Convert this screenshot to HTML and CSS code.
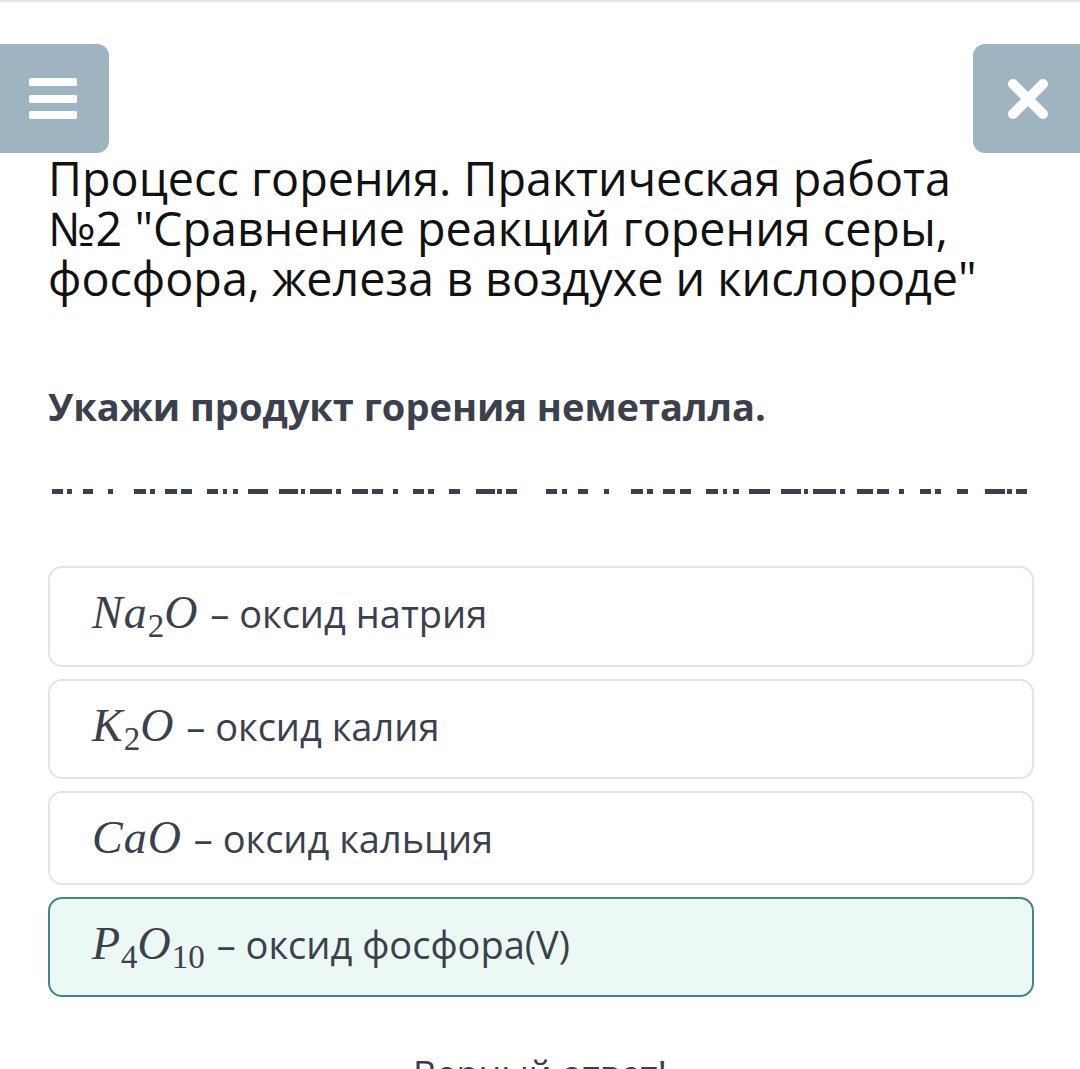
FILE: index.html
```html
<!DOCTYPE html>
<html lang="ru">
<head>
<meta charset="utf-8">
<title>Процесс горения</title>
<link rel="stylesheet" href="styles.css">
</head>
<body>
<div class="page">
  <header class="bar">
    <button class="btn btn-menu" aria-label="Меню">
      <svg width="48" height="42" viewBox="0 0 48 42">
        <rect x="0" y="0" width="48" height="8" rx="1.5" fill="#fff"/>
        <rect x="0" y="17" width="48" height="8" rx="1.5" fill="#fff"/>
        <rect x="0" y="33" width="48" height="8" rx="1.5" fill="#fff"/>
      </svg>
    </button>
    <button class="btn btn-close" aria-label="Закрыть">
      <svg width="44" height="44" viewBox="0 0 44 44">
        <path d="M7 7 L37 37 M37 7 L7 37" stroke="#fff" stroke-width="10" stroke-linecap="round"/>
      </svg>
    </button>
  </header>

  <h1 class="title">Процесс горения. Практическая работа №2 "Сравнение реакций горения серы, фосфора, железа в воздухе и кислороде"</h1>

  <p class="question">Укажи продукт горения неметалла.</p>

  <svg class="blanks" width="1080" height="5" viewBox="0 0 1080 5" fill="#3a414c">
    <rect x="52" width="11" height="5"/><rect x="67" width="5" height="5"/><rect x="83" width="10" height="5"/><rect x="108" width="5" height="5"/>
    <rect x="134" width="12" height="5"/><rect x="150" width="5" height="5"/><rect x="165" width="12" height="5"/><rect x="181" width="11" height="5"/>
    <rect x="207" width="11" height="5"/><rect x="223" width="4" height="5"/><rect x="233" width="5" height="5"/><rect x="248" width="20" height="5"/>
    <rect x="279" width="19" height="5"/><rect x="301" width="4" height="5"/><rect x="310" width="22" height="5"/><rect x="336" width="5" height="5"/>
    <rect x="352" width="16" height="5"/><rect x="372" width="11" height="5"/><rect x="393" width="5" height="5"/><rect x="413" width="11" height="5"/>
    <rect x="428" width="6" height="5"/><rect x="449" width="11" height="5"/><rect x="476" width="19" height="5"/><rect x="497" width="5" height="5"/>
    <rect x="506" width="11" height="5"/>
    <rect x="546" width="11" height="5"/><rect x="562" width="5" height="5"/><rect x="578" width="10" height="5"/><rect x="604" width="5" height="5"/>
    <rect x="631" width="12" height="5"/><rect x="647" width="6" height="5"/><rect x="663" width="12" height="5"/><rect x="680" width="11" height="5"/>
    <rect x="706" width="12" height="5"/><rect x="723" width="4" height="5"/><rect x="733" width="6" height="5"/><rect x="749" width="21" height="5"/>
    <rect x="781" width="20" height="5"/><rect x="804" width="4" height="5"/><rect x="813" width="23" height="5"/><rect x="840" width="5" height="5"/>
    <rect x="857" width="16" height="5"/><rect x="877" width="12" height="5"/><rect x="899" width="5" height="5"/><rect x="920" width="11" height="5"/>
    <rect x="935" width="6" height="5"/><rect x="957" width="11" height="5"/><rect x="985" width="20" height="5"/><rect x="1007" width="5" height="5"/>
    <rect x="1016" width="11" height="5"/>
  </svg>

  <ul class="options">
    <li class="option"><span class="math"><i>Na</i><sub>2</sub><i>O</i></span> – оксид натрия</li>
    <li class="option"><span class="math"><i>K</i><sub>2</sub><i>O</i></span> – оксид калия</li>
    <li class="option"><span class="math"><i>CaO</i></span> – оксид кальция</li>
    <li class="option option-selected"><span class="math"><i>P</i><sub>4</sub><i>O</i><sub>10</sub></span> – оксид фосфора(V)</li>
  </ul>

  <div class="footer">Верный ответ!</div>
</div>
</body>
</html>
```

FILE: styles.css
```css
html, body {
  margin: 0;
  padding: 0;
  background: #ffffff;
}

body {
  height: 1069px;
  overflow: hidden;
  font-family: "Open Sans", "Noto Sans", "DejaVu Sans", sans-serif;
}

.page {
  border-top: 2px solid #e4e6e8;
  overflow: hidden;
}

.bar {
  display: flex;
  justify-content: space-between;
  margin-top: 42px;
  height: 109px;
}

.btn {
  border: 0;
  padding: 0;
  height: 109px;
  background: #9fb4c1;
  border-radius: 12px;
  display: flex;
  align-items: center;
  cursor: pointer;
}

.btn-menu {
  width: 121px;
  margin-left: -12px;
  padding-left: 41px;
}

.btn-close {
  width: 120px;
  margin-right: -13px;
  padding-left: 33px;
}

.title {
  margin: 0;
  padding: 0 0 0 48px;
  max-width: 940px;
  font-size: 46.7px;
  line-height: 50px;
  font-weight: 400;
  color: #111111;
}

.question {
  margin: 81px 0 0 0;
  padding-left: 48px;
  font-size: 38px;
  line-height: 45px;
  font-weight: 700;
  color: #3a414c;
}

.blanks {
  display: block;
  margin-top: 60px;
}

.options {
  list-style: none;
  margin: 72px 0 0 48px;
  padding: 0;
  width: 986px;
  display: flex;
  flex-direction: column;
  gap: 12px;
}

.option {
  border: 2px solid #e3e5e8;
  border-radius: 14px;
  padding: 22px 40px 22px 42px;
  font-size: 38px;
  line-height: 45px;
  color: #3a414c;
}

.option:nth-child(2) {
  padding-bottom: 21px;
}

.option-selected {
  background: #ecf8f3;
  border-color: #3f8884;
  padding-bottom: 21px;
}

.math {
  font-family: "Liberation Serif", "Times New Roman", serif;
  font-size: 46px;
  letter-spacing: 1px;
  margin-right: 2px;
}

.math i {
  font-style: italic;
}

.math sub {
  font-size: 33px;
  line-height: 1;
  vertical-align: -9px;
  letter-spacing: 0;
}

.footer {
  margin-top: 55px;
  text-align: center;
  font-size: 36px;
  line-height: 44px;
  color: #3a414c;
}
```
